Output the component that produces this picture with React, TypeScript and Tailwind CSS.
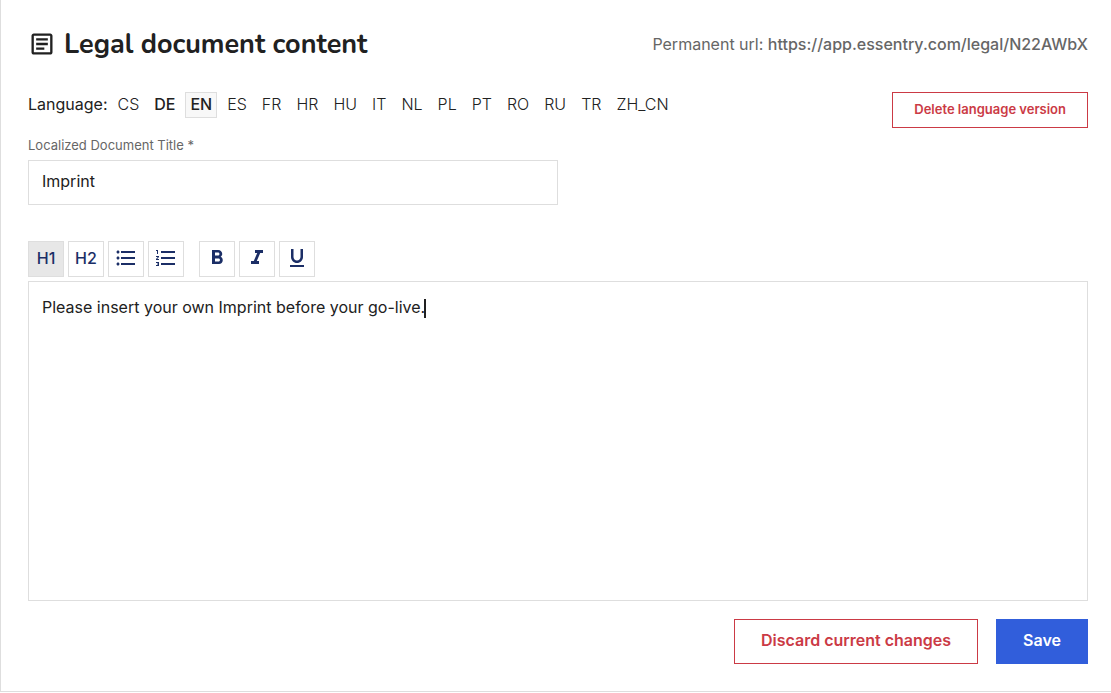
import { useState } from 'react'
import {
  MdFormatBold,
  MdFormatItalic,
  MdFormatListBulleted,
  MdFormatListNumbered,
  MdFormatUnderlined,
  MdOutlineArticle,
} from 'react-icons/md'

const languages = ['CS', 'DE', 'EN', 'ES', 'FR', 'HR', 'HU', 'IT', 'NL', 'PL', 'PT', 'RO', 'RU', 'TR', 'ZH_CN']
const translated = ['DE', 'EN']

const blockTools = [
  { name: 'Heading 1', icon: 'H1' },
  { name: 'Heading 2', icon: 'H2' },
  { name: 'Bulleted list', icon: <MdFormatListBulleted size={24} /> },
  { name: 'Numbered list', icon: <MdFormatListNumbered size={24} /> },
]

const inlineTools = [
  { name: 'Bold', icon: <MdFormatBold size={24} /> },
  { name: 'Italic', icon: <MdFormatItalic size={24} /> },
  { name: 'Underline', icon: <MdFormatUnderlined size={24} /> },
]

function ToolButton({ name, icon, active, onClick }: {
  name: string
  icon: React.ReactNode
  active: boolean
  onClick: () => void
}) {
  return (
    <button
      type="button"
      aria-label={name}
      aria-pressed={active}
      onClick={onClick}
      className={`flex h-9 w-9 items-center justify-center border border-[#dedede] pb-0.5 font-medium text-[#1b2e66] ${active ? 'bg-[#e7e7e7]' : 'bg-white'}`}
    >
      {icon}
    </button>
  )
}

export default function App() {
  const [language, setLanguage] = useState('EN')
  const [title, setTitle] = useState('Imprint')
  const [tool, setTool] = useState('Heading 1')

  return (
    <main className="border-b border-l border-[#dedede] bg-white pt-6 pr-[23px] pb-[27px] pl-[27px] font-['Inter',sans-serif] text-base text-[#212121]">
      <header className="flex items-center justify-between">
        <h1 className="flex items-center gap-2 font-['Nunito','Open_Sans',sans-serif] text-[27px] leading-10 font-bold">
          <MdOutlineArticle size={28} />
          <span className="pt-0.5 leading-[38px]">Legal document content</span>
        </h1>
        <p className="text-[#666]">
          Permanent url: <a href="https://app.essentry.com/legal/N22AWbX" className="font-medium">https://app.essentry.com/legal/N22AWbX</a>
        </p>
      </header>

      <div className="mt-7 flex items-start justify-between">
        <nav aria-label="Language" className="flex items-center gap-[5px]">
          <span className="pb-0.5">Language:</span>
          {languages.map(code => (
            <button
              key={code}
              type="button"
              onClick={() => setLanguage(code)}
              className={`border px-1 pb-0.5 leading-[22px] ${translated.includes(code) ? 'font-medium' : 'font-light'} ${code === language ? 'border-[#dedede] bg-[#f8f8f8]' : 'border-transparent'}`}
            >
              {code}
            </button>
          ))}
        </nav>
        <button type="button" className="h-9 border border-[#cb3a45] px-[21px] text-[13px] font-semibold text-[#cb3a45]">
          Delete language version
        </button>
      </div>

      <div className="mt-[7px] w-1/2">
        <label htmlFor="title" className="block text-[13px] leading-5 text-[#666]">Localized Document Title *</label>
        <input
          id="title"
          value={title}
          onChange={e => setTitle(e.target.value)}
          className="mt-[5px] h-[45px] w-full border border-[#dedede] px-[13px] pb-[3px] outline-none"
        />
      </div>

      <div className="mt-9 flex gap-[15px]">
        <div className="flex gap-1">
          {blockTools.map(t => (
            <ToolButton key={t.name} {...t} active={tool === t.name} onClick={() => setTool(t.name)} />
          ))}
        </div>
        <div className="flex gap-1">
          {inlineTools.map(t => (
            <ToolButton key={t.name} {...t} active={tool === t.name} onClick={() => setTool(t.name)} />
          ))}
        </div>
      </div>

      <div
        role="textbox"
        aria-multiline="true"
        aria-label="Document content"
        contentEditable
        suppressContentEditableWarning
        className="mt-1 min-h-80 border border-[#dedede] px-[13px] py-[13px] leading-6 outline-none"
      >
        Please insert your own Imprint before your go-live.
        <span className="-ml-px inline-block h-[19px] w-0.5 bg-[#212121] align-middle" />
      </div>

      <footer className="mt-[18px] flex justify-end gap-[18px]">
        <button type="button" className="h-[45px] border border-[#cb3a45] px-[26px] pb-[3px] font-semibold text-[#cb3a45]">
          Discard current changes
        </button>
        <button type="button" className="h-[45px] bg-[#315edb] px-[27px] pb-[3px] font-semibold text-white">
          Save
        </button>
      </footer>
    </main>
  )
}
